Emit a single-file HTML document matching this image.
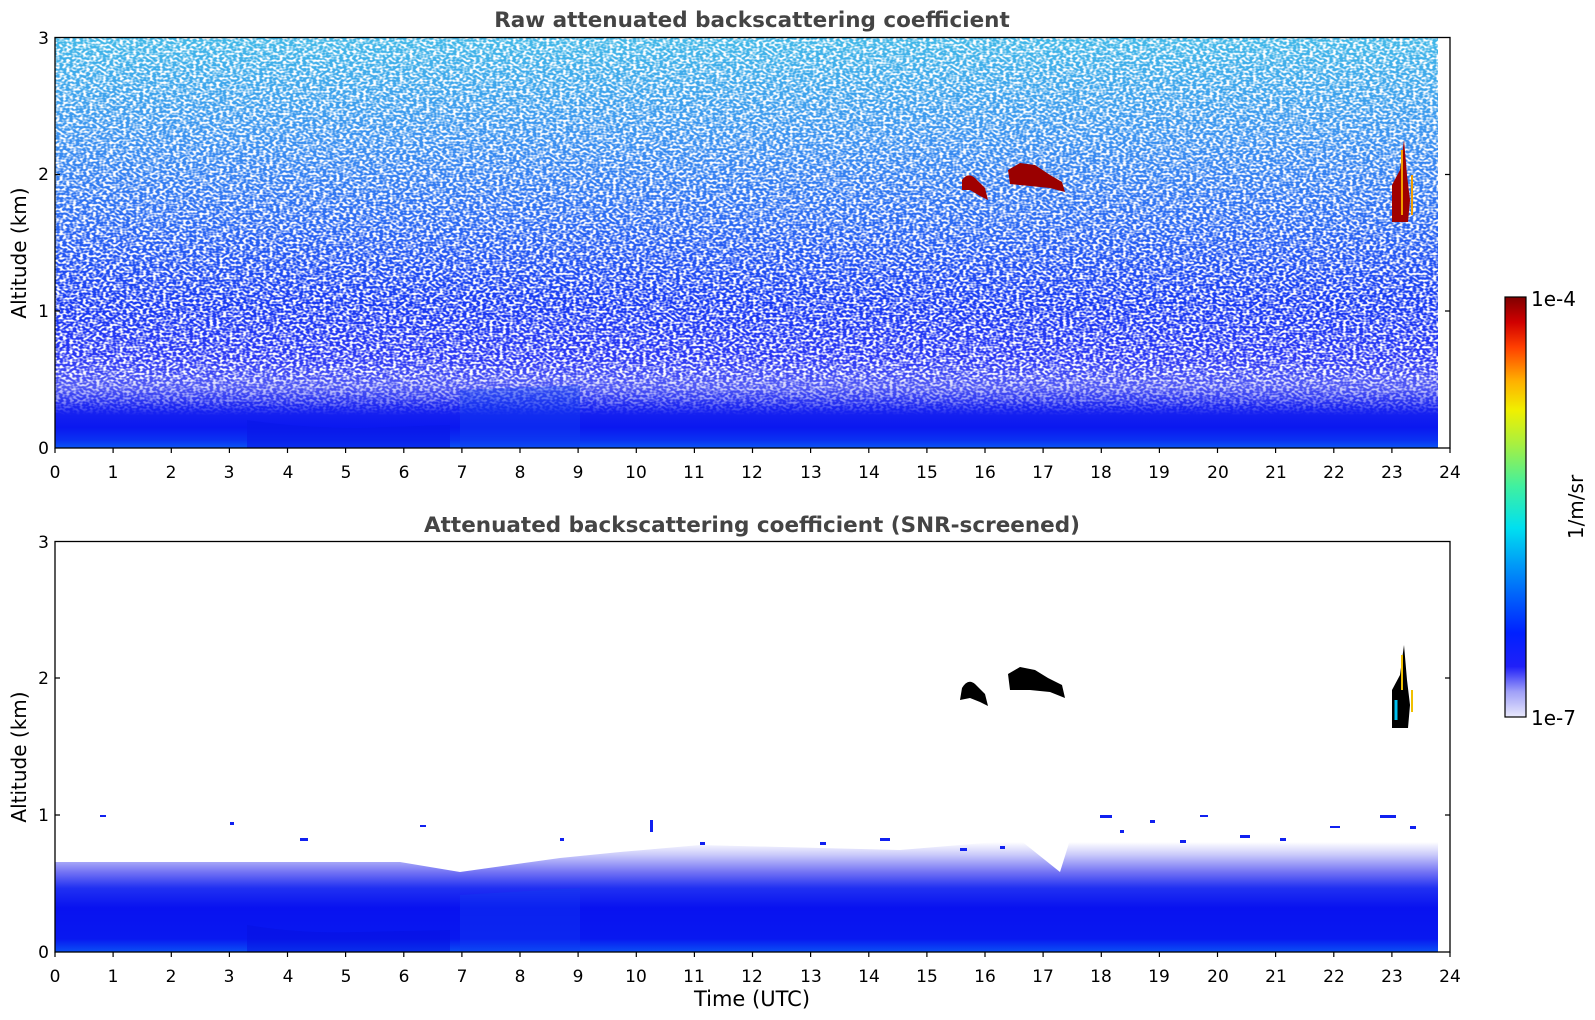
<!DOCTYPE html>
<html><head><meta charset="utf-8"><style>
html,body{margin:0;padding:0;background:#fff;}
svg{display:block;}
text{font-family:"DejaVu Sans","Liberation Sans",sans-serif;}
</style></head><body>
<svg width="1595" height="1020" viewBox="0 0 1595 1020" xmlns="http://www.w3.org/2000/svg">
<defs>
<linearGradient id="gt" x1="0" y1="0" x2="0" y2="1">
<stop offset="0" stop-color="#40b8e8"/>
<stop offset="0.25" stop-color="#3a90f0"/>
<stop offset="0.45" stop-color="#2a68f2"/>
<stop offset="0.65" stop-color="#1838f2"/>
<stop offset="0.78" stop-color="#2a36f4"/>
<stop offset="0.85" stop-color="#5058f4"/>
<stop offset="0.9" stop-color="#1a24f0"/>
<stop offset="0.95" stop-color="#0a18f0"/>
<stop offset="0.98" stop-color="#0a30f2"/>
<stop offset="1" stop-color="#0a55f5"/>
</linearGradient>
<linearGradient id="gb" x1="0" y1="0" x2="0" y2="1">
<stop offset="0" stop-color="#ffffff"/>
<stop offset="0.12" stop-color="#c8c8fa"/>
<stop offset="0.28" stop-color="#7070f4"/>
<stop offset="0.42" stop-color="#2030f2"/>
<stop offset="0.6" stop-color="#0812f0"/>
<stop offset="0.88" stop-color="#0818f0"/>
<stop offset="1" stop-color="#0a50f5"/>
</linearGradient>
<linearGradient id="cb" x1="0" y1="1" x2="0" y2="0">
<stop offset="0" stop-color="#e8e8fb"/>
<stop offset="0.06" stop-color="#a0a0f8"/>
<stop offset="0.12" stop-color="#2020f8"/>
<stop offset="0.2" stop-color="#0020ff"/>
<stop offset="0.35" stop-color="#0090f8"/>
<stop offset="0.45" stop-color="#00e0f0"/>
<stop offset="0.55" stop-color="#40f0a0"/>
<stop offset="0.65" stop-color="#a8f040"/>
<stop offset="0.73" stop-color="#f0f000"/>
<stop offset="0.8" stop-color="#ffb000"/>
<stop offset="0.88" stop-color="#ff4000"/>
<stop offset="0.94" stop-color="#d00000"/>
<stop offset="1" stop-color="#800000"/>
</linearGradient>
<filter id="speck" x="0" y="0" width="1" height="1">
<feTurbulence type="fractalNoise" baseFrequency="0.3 0.45" numOctaves="1" seed="3"/>
<feColorMatrix type="matrix" values="0 0 0 0 1  0 0 0 0 1  0 0 0 0 1  4 0 0 0 -1.65"/>
</filter>
<linearGradient id="fade" x1="0" y1="0" x2="0" y2="1">
<stop offset="0" stop-color="#fff" stop-opacity="1"/>
<stop offset="0.82" stop-color="#fff" stop-opacity="1"/>
<stop offset="0.89" stop-color="#fff" stop-opacity="0.4"/>
<stop offset="0.92" stop-color="#fff" stop-opacity="0"/>
<stop offset="1" stop-color="#fff" stop-opacity="0"/>
</linearGradient>
<mask id="m1"><rect x="55" y="38" width="1383" height="410" fill="url(#fade)"/></mask>
</defs>

<text x="752" y="27" font-size="21.5" font-weight="bold" fill="#444" text-anchor="middle">Raw attenuated backscattering coefficient</text>
<rect x="55" y="38" width="1383" height="410" fill="url(#gt)"/>
<rect x="55" y="38" width="1383" height="410" filter="url(#speck)" mask="url(#m1)"/>
<path d="M247,448 L247,420 Q300,428 360,428 L450,425 L450,448Z" fill="#0818e8" opacity="0.6"/>
<path d="M460,448 L460,390 L580,385 L580,448Z" fill="#1040f0" opacity="0.4"/>
<path d="M962,180 Q968,172 975,178 L985,188 L988,200 L980,196 L970,190 L962,190Z" fill="#a00000"/>
<path d="M1008,170 L1020,163 L1035,165 L1050,175 L1062,182 L1065,192 L1050,188 L1030,186 L1010,184Z" fill="#9a0000"/>
<path d="M1392,185 L1400,170 L1404,140 L1407,175 L1410,200 L1408,222 L1392,222Z" fill="#a00000"/>
<path d="M1402,150 L1402,215 M1412,175 L1412,215" stroke="#f0a000" stroke-width="2"/>

<rect x="55" y="37.5" width="1395" height="410.5" fill="none" stroke="#000" stroke-width="1.3"/>

<text x="752" y="532" font-size="21.5" font-weight="bold" fill="#444" text-anchor="middle">Attenuated backscattering coefficient (SNR-screened)</text>
<rect x="55" y="842" width="1383" height="110" fill="url(#gb)"/>
<path d="M55,862 L400,862 L460,872 L560,858 L620,852 L700,845 L900,850 L1020,840 L1060,872 L1070,840 L1437,840 L1437,842 L55,842Z" fill="#fff"/>
<path d="M247,952 L247,925 Q300,934 360,932 L450,930 L450,952Z" fill="#0610e0" opacity="0.5"/>
<path d="M460,952 L460,895 L580,888 L580,952Z" fill="#1040f0" opacity="0.35"/>
<g fill="#1020f0">
<rect x="100" y="815" width="6" height="2"/><rect x="230" y="822" width="4" height="3"/><rect x="300" y="838" width="8" height="3"/>
<rect x="420" y="825" width="6" height="2"/><rect x="650" y="820" width="3" height="12"/><rect x="700" y="842" width="5" height="3"/>
<rect x="880" y="838" width="10" height="3"/><rect x="1100" y="815" width="12" height="3"/><rect x="1150" y="820" width="5" height="3"/>
<rect x="1200" y="815" width="8" height="2"/><rect x="1240" y="835" width="10" height="3"/><rect x="1280" y="838" width="6" height="3"/>
<rect x="1330" y="826" width="10" height="2"/><rect x="1380" y="815" width="16" height="3"/><rect x="1410" y="826" width="6" height="3"/>
<rect x="1120" y="830" width="4" height="3"/><rect x="1180" y="840" width="6" height="3"/><rect x="960" y="848" width="7" height="3"/>
<rect x="1000" y="846" width="5" height="3"/><rect x="820" y="842" width="6" height="3"/><rect x="560" y="838" width="4" height="3"/>
</g>
<path d="M962,688 Q968,678 975,684 L985,694 L988,706 L980,702 L970,698 L960,700Z" fill="#000"/>
<path d="M1008,674 L1020,667 L1035,670 L1048,678 L1062,685 L1065,698 L1050,692 L1030,690 L1010,690Z" fill="#000"/>
<path d="M1392,690 L1400,675 L1404,645 L1407,680 L1410,705 L1408,728 L1392,728Z" fill="#000"/>
<path d="M1396,700 L1396,720" stroke="#00c0f0" stroke-width="3"/>
<path d="M1402,655 L1402,690 M1412,690 L1412,712" stroke="#f0c000" stroke-width="2"/>

<rect x="55" y="541.5" width="1395" height="410.5" fill="none" stroke="#000" stroke-width="1.3"/>

<g stroke="#000" stroke-width="1.2">
<path d="M55,448v5 M113.1,448v5 M171.3,448v5 M229.4,448v5 M287.5,448v5 M345.6,448v5 M403.8,448v5 M461.9,448v5 M520,448v5 M578.1,448v5 M636.3,448v5 M694.4,448v5 M752.5,448v5 M810.6,448v5 M868.8,448v5 M926.9,448v5 M985,448v5 M1043.1,448v5 M1101.3,448v5 M1159.4,448v5 M1217.5,448v5 M1275.6,448v5 M1333.8,448v5 M1391.9,448v5 M1450,448v5"/>
<path d="M55,952v5 M113.1,952v5 M171.3,952v5 M229.4,952v5 M287.5,952v5 M345.6,952v5 M403.8,952v5 M461.9,952v5 M520,952v5 M578.1,952v5 M636.3,952v5 M694.4,952v5 M752.5,952v5 M810.6,952v5 M868.8,952v5 M926.9,952v5 M985,952v5 M1043.1,952v5 M1101.3,952v5 M1159.4,952v5 M1217.5,952v5 M1275.6,952v5 M1333.8,952v5 M1391.9,952v5 M1450,952v5"/>
<path d="M55,311h5 M55,174.5h5 M1450,311h-5 M1450,174.5h-5 M55,815h5 M55,678h5 M1450,815h-5 M1450,678h-5"/>
</g>
<g font-size="17" fill="#000" text-anchor="middle">
<text x="55" y="478">0</text><text x="113" y="478">1</text><text x="171" y="478">2</text><text x="229" y="478">3</text><text x="288" y="478">4</text><text x="346" y="478">5</text><text x="404" y="478">6</text><text x="462" y="478">7</text><text x="520" y="478">8</text><text x="578" y="478">9</text><text x="636" y="478">10</text><text x="694" y="478">11</text><text x="752" y="478">12</text><text x="811" y="478">13</text><text x="869" y="478">14</text><text x="927" y="478">15</text><text x="985" y="478">16</text><text x="1043" y="478">17</text><text x="1101" y="478">18</text><text x="1159" y="478">19</text><text x="1218" y="478">20</text><text x="1276" y="478">21</text><text x="1334" y="478">22</text><text x="1392" y="478">23</text><text x="1450" y="478">24</text>
<text x="55" y="982">0</text><text x="113" y="982">1</text><text x="171" y="982">2</text><text x="229" y="982">3</text><text x="288" y="982">4</text><text x="346" y="982">5</text><text x="404" y="982">6</text><text x="462" y="982">7</text><text x="520" y="982">8</text><text x="578" y="982">9</text><text x="636" y="982">10</text><text x="694" y="982">11</text><text x="752" y="982">12</text><text x="811" y="982">13</text><text x="869" y="982">14</text><text x="927" y="982">15</text><text x="985" y="982">16</text><text x="1043" y="982">17</text><text x="1101" y="982">18</text><text x="1159" y="982">19</text><text x="1218" y="982">20</text><text x="1276" y="982">21</text><text x="1334" y="982">22</text><text x="1392" y="982">23</text><text x="1450" y="982">24</text>
</g>
<g font-size="17" fill="#000" text-anchor="end">
<text x="49" y="454">0</text><text x="49" y="317">1</text><text x="49" y="180">2</text><text x="49" y="44">3</text>
<text x="49" y="958">0</text><text x="49" y="821">1</text><text x="49" y="684">2</text><text x="49" y="548">3</text>
</g>
<text transform="translate(26,253) rotate(-90)" font-size="20" text-anchor="middle">Altitude (km)</text>
<text transform="translate(26,757) rotate(-90)" font-size="20" text-anchor="middle">Altitude (km)</text>
<text x="752" y="1006" font-size="21" text-anchor="middle">Time (UTC)</text>

<rect x="1505" y="297" width="21" height="420" fill="url(#cb)" stroke="#000" stroke-width="1.2"/>
<text x="1531" y="306" font-size="20">1e-4</text>
<text x="1531" y="725" font-size="20">1e-7</text>
<text transform="translate(1583,507) rotate(-90)" font-size="20" text-anchor="middle">1/m/sr</text>
</svg>
</body></html>
